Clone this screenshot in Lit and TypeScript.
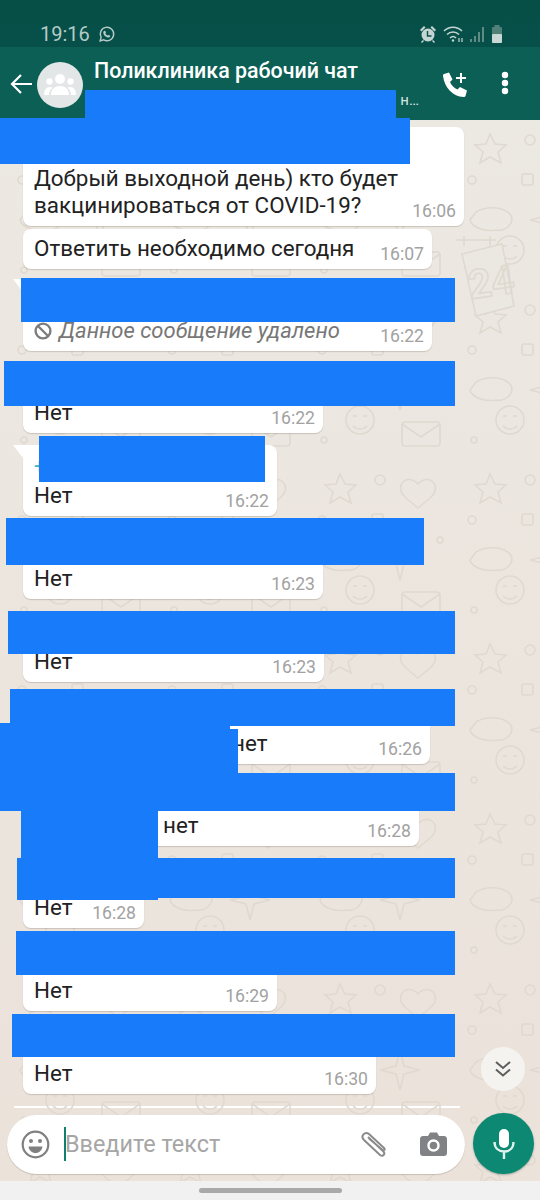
import { LitElement, html, css } from "lit";
import { customElement } from "lit/decorators.js";

interface Msg {
  gap: number;
  w: number;
  h: number;
  text?: string;
  lines?: string[];
  time: string;
  indent?: number;
  tail?: boolean;
  sender?: boolean;
  deleted?: boolean;
}

const MSGS: Msg[] = [
  { gap: 0, w: 441, h: 99, lines: ["Добрый выходной день) кто будет", "вакцинироваться от COVID-19?"], time: "16:06" },
  { gap: 3, w: 409, h: 40, text: "Ответить необходимо сегодня", time: "16:07" },
  { gap: 10, w: 409, h: 72, deleted: true, text: "Данное сообщение удалено", time: "16:22", tail: true },
  { gap: 10, w: 300, h: 72, text: "Нет", time: "16:22" },
  { gap: 12, w: 254, h: 71, text: "Нет", time: "16:22", tail: true, sender: true },
  { gap: 11, w: 300, h: 72, text: "Нет", time: "16:23" },
  { gap: 12, w: 301, h: 71, text: "Нет", time: "16:23" },
  { gap: 10, w: 407, h: 72, text: "нет", time: "16:26", indent: 198 },
  { gap: 11, w: 396, h: 71, text: "нет", time: "16:28", indent: 129 },
  { gap: 11, w: 121, h: 71, text: "Нет", time: "16:28" },
  { gap: 11, w: 254, h: 72, text: "Нет", time: "16:29" },
  { gap: 11, w: 353, h: 72, text: "Нет", time: "16:30" },
];

const MASKS: number[][] = [
  [85, 90, 311, 28],
  [0, 118, 410, 46],
  [21, 278, 434, 44],
  [4, 361, 451, 45],
  [39, 436, 226, 46],
  [6, 518, 418, 47],
  [8, 611, 447, 43],
  [10, 689, 445, 37],
  [0, 723, 230, 50],
  [230, 729, 8, 44],
  [0, 773, 455, 38],
  [21, 811, 137, 47],
  [17, 858, 438, 40],
  [17, 898, 141, 2],
  [16, 931, 439, 44],
  [12, 1014, 443, 43],
];

@customElement("app-root")
export class AppRoot extends LitElement {
  static styles = css`
    :host {
      display: flex;
      flex-direction: column;
      position: relative;
      width: 540px;
      height: 1200px;
      overflow: hidden;
      font-family: Roboto, "Noto Sans", sans-serif;
      background: linear-gradient(#ece9e3, #ebe2da);
    }
    .doodles {
      position: absolute;
      left: 0;
      top: 120px;
      width: 540px;
      height: 1061px;
      fill: none;
      stroke: #e0d9d0;
      stroke-width: 1.6;
    }
    .doodles text {
      font: 700 40px Roboto, sans-serif;
    }
    .status {
      position: relative;
      height: 47px;
      flex: none;
      box-sizing: border-box;
      padding: 21px 37px 0 40px;
      display: flex;
      align-items: center;
      background: linear-gradient(#064f46, #07504a);
      color: #b4cbc6;
      font-size: 20px;
    }
    .status .clock { margin-right: 8px; }
    .status .spacer { flex: 1; }
    .status svg { display: block; }
    .status-icons { display: flex; align-items: center; gap: 6px; }
    .header {
      position: relative;
      height: 73px;
      flex: none;
      display: flex;
      align-items: flex-start;
      background: #0c5f55;
      color: #fff;
    }
    .back { margin: 26px 0 0 10px; flex: none; }
    .avatar {
      width: 46px;
      height: 46px;
      border-radius: 50%;
      background: #e3e6e7;
      margin: 15px 0 0 4px;
      flex: none;
      display: flex;
      align-items: center;
      justify-content: center;
    }
    .titles { margin-left: 11px; width: 325px; flex: none; }
    .title { font-size: 21.4px; font-weight: 500; line-height: 26px; margin-top: 11px; white-space: nowrap; }
    .sub {
      font-size: 15px;
      line-height: 18px;
      margin-top: 7px;
      text-align: right;
      color: #d5e5e1;
      white-space: nowrap;
    }
    .call { margin: 25px 0 0 23px; flex: none; }
    .more { margin: 24px 0 0 32px; flex: none; }
    .chat {
      position: relative;
      flex: 1;
      min-height: 0;
      padding: 7px 0 0 23px;
      display: flex;
      flex-direction: column;
      align-items: flex-start;
    }
    .bubble {
      position: relative;
      box-sizing: border-box;
      flex: none;
      background: #fff;
      border-radius: 8px;
      box-shadow: 0 1px 1px rgba(120, 105, 90, 0.28);
      padding: 0 8px 0 11px;
      display: flex;
      flex-direction: column;
      justify-content: flex-end;
    }
    .bubble.tail { border-top-left-radius: 0; }
    .tail-mark {
      position: absolute;
      left: -10px;
      top: 0;
      width: 0;
      height: 0;
      border-top: 13px solid #fff;
      border-left: 10px solid transparent;
    }
    .sender { color: #35b6c6; font-size: 20px; line-height: 20px; margin-bottom: 6px; }
    .row { display: flex; justify-content: space-between; align-items: flex-end; }
    .text { font-size: 22.4px; line-height: 27px; color: #222; padding-bottom: 7px; white-space: nowrap; }
    .text.del { color: #777; font-style: italic; display: flex; align-items: center; gap: 7px; font-size: 22px; }
    .time { font-size: 17.6px; line-height: 20px; color: #a2a2a2; padding-bottom: 5px; white-space: nowrap; }
    .rule { height: 2px; width: 446px; margin: 2px 0 5px 14px; background: #fff; flex: none; }
    .composer {
      flex: none;
      display: flex;
      align-items: center;
      padding: 0 6px 7px 7px;
      gap: 8px;
      position: relative;
    }
    .input {
      flex: 1;
      height: 59px;
      box-sizing: border-box;
      margin-top: 1px;
      border-radius: 30px;
      background: #fff;
      box-shadow: 0 1px 1px rgba(120, 105, 90, 0.3);
      display: flex;
      align-items: center;
      padding-left: 14px;
    }
    .caret { width: 2px; height: 34px; background: #0f7f72; margin-left: 14px; flex: none; }
    .placeholder { font-size: 23.4px; color: #a6a6a6; flex: 1; white-space: nowrap; margin-left: -1px; }
    .clip { flex: none; margin-right: 31px; }
    .cam { flex: none; margin-right: 18px; }
    .mic {
      width: 61px;
      height: 61px;
      border-radius: 50%;
      background: #0d8873;
      flex: none;
      display: flex;
      align-items: center;
      justify-content: center;
      box-shadow: 0 1px 2px rgba(60, 90, 80, 0.4);
    }
    .nav {
      height: 19px;
      flex: none;
      background: #f1f1f1;
      display: flex;
      justify-content: center;
      padding-top: 7px;
      box-sizing: border-box;
      position: relative;
    }
    .pill { width: 143px; height: 5px; border-radius: 3px; background: #a9a9a9; }
    .down {
      position: absolute;
      left: 481px;
      top: 1047px;
      width: 44px;
      height: 44px;
      border-radius: 50%;
      background: #f5f3f0;
      display: flex;
      align-items: center;
      justify-content: center;
    }
    .mask { position: absolute; background: #187bfa; }
  `;

  private doodles() {
    return html`<svg class="doodles" viewBox="0 0 540 1061">
      <defs>
        <pattern id="tile" width="150" height="170" patternUnits="userSpaceOnUse" x="460" y="0">
          <path d="M30 14l5 10 11 1-8 7 3 11-11-6-10 6 3-11-8-7 11-1z" />
          <circle cx="70" cy="20" r="5" />
          <circle cx="12" cy="60" r="4" />
          <rect x="62" y="54" width="11" height="11" rx="2" />
          <path d="M108 24c-10-12-26 2-12 14l12 10 12-10c14-12-2-26-12-14z" />
          <path d="M16 92c10-6 26-6 34 2 6 8-4 18-14 16-10 2-24-2-26-10z" />
          <path d="M90 80l4 16 16 4-16 4-4 16-4-16-16-4 16-4z" />
          <circle cx="130" cy="80" r="3" />
          <circle cx="50" cy="130" r="14" />
          <path d="M43 126h4M53 126h4M43 136c4 4 10 4 14 0" />
          <rect x="92" y="132" width="38" height="24" rx="3" />
          <path d="M92 134l19 13 19-13" />
          <circle cx="14" cy="150" r="3" />
        </pattern>
      </defs>
      <rect x="0" y="0" width="540" height="1061" fill="url(#tile)" stroke="none" />
      <g transform="translate(460 110)">
        <path d="M2 24l40-10 12 62-38 10z" fill="#ebe8e2" />
        <path d="M-4 10h40M4 6v10M30 6v10" />
        <text x="8" y="66" transform="rotate(-8 30 50)">24</text>
      </g>
      <g transform="translate(0 0)" stroke="#e0d9d0">
        <circle cx="479" cy="215" r="0" />
      </g>
    </svg>`;
  }

  private bubble(m: Msg) {
    return html`<div
      class="bubble ${m.tail ? "tail" : ""}"
      style="margin-top:${m.gap}px;width:${m.w}px;height:${m.h}px"
    >
      ${m.tail ? html`<span class="tail-mark"></span>` : ""}
      ${m.sender ? html`<div class="sender">+</div>` : ""}
      ${m.lines
        ? html`<div class="text" style="padding-bottom:0">${m.lines[0]}</div>`
        : ""}
      <div class="row">
        <div
          class="text ${m.deleted ? "del" : ""}"
          style="margin-left:${m.indent ?? 0}px"
        >
          ${m.deleted
            ? html`<svg width="18" height="18" viewBox="0 0 18 18" fill="none" stroke="#7d7d7d" stroke-width="2.4">
                <circle cx="9" cy="9" r="7.4" /><path d="M4 4l10 10" />
              </svg>`
            : ""}
          ${m.lines ? m.lines[1] : m.text}
        </div>
        <div class="time">${m.time}</div>
      </div>
    </div>`;
  }

  render() {
    return html`
      ${this.doodles()}
      <div class="status">
        <span class="clock">19:16</span>
        <svg width="17" height="17" viewBox="0 0 24 24" fill="none" stroke="#b4cbc6" stroke-width="2">
          <path d="M3 21l1.4-5A9.5 9.5 0 1 1 8 19.6z" />
          <path fill="#b4cbc6" stroke="none" d="M8.8 7c.9-.6 1.4-.3 1.700.4l.6 1.500c.2.500 0 .9-.6 1.600.6 1.300 1.700 2.300 3 3 .7-.7 1.100-.9 1.600-.7l1.500.7c.7.3.9.8.4 1.600-.7 1.100-2 1.400-3.500 1-3-.9-5.300-3.200-6-6-.3-1.300 0-2.400.800-3.100z" />
        </svg>
        <span class="spacer"></span>
        <div class="status-icons">
          <svg width="18" height="18" viewBox="0 0 18 18" fill="#c5d6d2">
            <circle cx="9" cy="10" r="6.500" />
            <path d="M1 5l4-4 1.500 1.500-4 4zM17 5l-4-4-1.500 1.500 4 4zM4 15l-2 2 1 1 2-2zM14 15l2 2-1 1-2-2z" />
            <path d="M8.500 6v5h4" fill="none" stroke="#07504a" stroke-width="1.400" />
          </svg>
          <svg width="21" height="18" viewBox="0 0 21 18" fill="none" stroke="#c5d6d2" stroke-width="1.500">
            <path d="M1 6c5-5 13-5 18 0M4 9.500c3.500-3.500 8.500-3.500 12 0M7 13c2-2 4-2 6 0" />
            <circle cx="10" cy="15.500" r="1.200" fill="#c5d6d2" stroke="none" />
            <path d="M16 17v-4M19 13v4" stroke-width="1.200" />
          </svg>
          <svg width="15" height="18" viewBox="0 0 15 18" stroke="#7d9e97" stroke-width="1.500">
            <path d="M1 17v-3M5 17v-6M9 17v-10M13 17v-15" />
          </svg>
          <svg width="12" height="18" viewBox="0 0 12 18">
            <rect x="1" y="2" width="10" height="16" rx="1" fill="#4f8178" />
            <rect x="3.500" y="0" width="5" height="2" fill="#4f8178" />
            <rect x="1" y="9" width="10" height="9" rx="1" fill="#c8d8d4" />
          </svg>
        </div>
      </div>
      <div class="header">
        <svg class="back" width="23" height="22" viewBox="0 0 23 22" fill="none" stroke="#fff" stroke-width="2.200">
          <path d="M22 11H2M11 2l-9 9 9 9" />
        </svg>
        <div class="avatar">
          <svg width="32" height="24" viewBox="0 0 32 24" fill="#fff">
            <circle cx="16" cy="6" r="5" />
            <circle cx="5.500" cy="8.500" r="3.200" />
            <circle cx="26.500" cy="8.500" r="3.200" />
            <path d="M7 22c0-6 4-9 9-9s9 3 9 9z" />
            <path d="M0 22c0-5 2-8 6-8 1 0 2 .3 2.500.8C6 16.500 5 19 5 22zM32 22c0-5-2-8-6-8-1 0-2 .3-2.500.8C26 16.500 27 19 27 22z" />
          </svg>
        </div>
        <div class="titles">
          <div class="title">Поликлиника рабочий чат</div>
          <div class="sub">н…</div>
        </div>
        <svg class="call" width="27" height="27" viewBox="0 0 27 27" fill="#fff">
          <path d="M2 2l5-1.500 3.500 7-2.500 2.500c1.500 3.500 4.200 6 7.500 7.500l2.500-2.500 7 3.500-1.500 5.500c-.3.800-1 1-2 1C11 24.500 2.500 16 1 4c-.1-1 .3-1.700 1-2z" />
          <path d="M19 1v10M14 6h10" fill="none" stroke="#fff" stroke-width="2" />
        </svg>
        <svg class="more" width="8" height="24" viewBox="0 0 8 24" fill="#fff">
          <circle cx="4" cy="4" r="3.200" />
          <circle cx="4" cy="12" r="3.200" />
          <circle cx="4" cy="20" r="3.200" />
        </svg>
      </div>
      <div class="chat">${MSGS.map((m) => this.bubble(m))}</div>
      <div class="rule"></div>
      <div class="composer">
        <div class="input">
          <svg width="29" height="29" viewBox="0 0 29 29" fill="none" stroke="#808080" stroke-width="2.200">
            <circle cx="14.500" cy="14.500" r="12.800" />
            <circle cx="10" cy="11" r="2" fill="#808080" stroke="none" />
            <circle cx="19" cy="11" r="2" fill="#808080" stroke="none" />
            <path d="M7.500 16.500h14c-.5 4-3.500 6.500-7 6.500s-6.500-2.500-7-6.500z" fill="#808080" stroke="none" />
          </svg>
          <span class="caret"></span>
          <span class="placeholder">Введите текст</span>
          <svg class="clip" width="29" height="27" viewBox="0 0 29 27" fill="none" stroke="#8a8a8a" stroke-width="2">
            <path d="M8 6l15 14c3 3 0 6-3 4L4 9C0 5 5 0 9 3l15 14c1.500 1.500 0 3-1.500 2L9 7.500" />
          </svg>
          <svg class="cam" width="27" height="24" viewBox="0 0 27 24">
            <path fill="#808285" d="M3 4h5l2-3.500h7L19 4h5c1.700 0 3 1.300 3 3v14c0 1.700-1.300 3-3 3H3c-1.700 0-3-1.300-3-3V7c0-1.700 1.300-3 3-3z" />
            <circle cx="13.500" cy="13.500" r="5" fill="none" stroke="#fff" stroke-width="2.400" />
          </svg>
        </div>
        <div class="mic">
          <svg width="22" height="30" viewBox="0 0 22 30" fill="none" stroke="#dff3ee" stroke-width="2.400">
            <rect x="6" y="0" width="10" height="19" rx="5" fill="#fff" stroke="none" />
            <path d="M1.500 13c0 6 4 9.500 9.500 9.500s9.500-3.500 9.500-9.500M11 22v8" />
          </svg>
        </div>
      </div>
      <div class="nav"><span class="pill"></span></div>
      <div class="down">
        <svg width="18" height="18" viewBox="0 0 18 18" fill="none" stroke="#5d5d5d" stroke-width="2">
          <path d="M2 2l7 6 7-6M2 9.500l7 6 7-6" />
        </svg>
      </div>
      ${MASKS.map(
        ([x, y, w, h]) =>
          html`<div class="mask" style="left:${x}px;top:${y}px;width:${w}px;height:${h}px"></div>`
      )}
    `;
  }
}
